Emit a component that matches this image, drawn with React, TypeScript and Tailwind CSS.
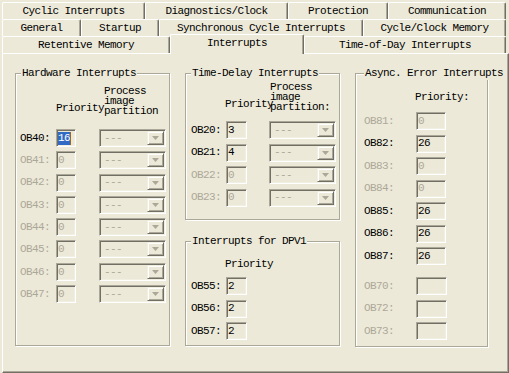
import React from 'react';

// Windows XP classic property sheet: "Interrupts" tab of a CPU config dialog

const sunken =
  'border border-t-[#aca899] border-l-[#aca899] border-b-white border-r-white shadow-[inset_1px_1px_0_#716f64,inset_-1px_-1px_0_#f1efe2]';

function Edit({
  value,
  disabled = false,
  selected = false,
  className = '',
}: {
  value: string;
  disabled?: boolean;
  selected?: boolean;
  className?: string;
}) {
  return (
    <div className={`${sunken} ${className} h-[18px] flex items-center pl-[1px] overflow-hidden`}>
      {selected ? (
        <>
          <span className="bg-[#316ac5] text-white leading-[13px]">{value}</span>
          <span className="w-px h-[13px] bg-[#9c6a1c]" />
        </>
      ) : (
        <span className={disabled ? 'text-[#aca899]' : 'text-black'}>{value}</span>
      )}
    </div>
  );
}

function Combo() {
  return (
    <div className={`${sunken} w-[67px] h-[18px] flex items-center justify-between pl-[4px] pr-[1px]`}>
      <span className="text-[#aca899]">---</span>
      <div className="w-[17px] h-[14px] bg-[#ece9d8] border border-t-[#f1efe2] border-l-[#f1efe2] border-b-[#716f64] border-r-[#716f64] shadow-[inset_1px_1px_0_#ffffff,inset_-1px_-1px_0_#aca899] flex items-center justify-center">
        <svg width="7" height="4" viewBox="0 0 7 4">
          <path d="M0 0h7L3.5 4z" fill="#aca899" />
        </svg>
      </div>
    </div>
  );
}

function Group({
  title,
  className = '',
  titleClass = 'left-[5px]',
  children,
}: {
  title: string;
  className?: string;
  titleClass?: string;
  children: React.ReactNode;
}) {
  return (
    <div
      className={`relative border border-[#aca899] shadow-[inset_1px_1px_0_#ffffff,1px_1px_0_#ffffff] ${className}`}
    >
      <span className={`absolute -top-[7px] ${titleClass} px-[1px] bg-[#ece9d8] leading-[13px] whitespace-nowrap`}>
        {title}
      </span>
      {children}
    </div>
  );
}

function Tab({ label, w, selected = false }: { label: string; w: string; selected?: boolean }) {
  if (selected) {
    return (
      <div
        className={`${w} relative z-10 -mt-[2px] h-[20px] bg-[#ece9d8] border-t border-l border-white rounded-t-[2px] border-r border-r-[#716f64] shadow-[inset_-1px_0_0_#aca899] text-center leading-[17px]`}
      >
        {label}
      </div>
    );
  }
  return (
    <div
      className={`${w} h-[17px] bg-[#ece9d8] border-t border-l border-white rounded-t-[2px] border-r border-r-[#716f64] shadow-[inset_-1px_0_0_#aca899] text-center leading-[16px]`}
    >
      {label}
    </div>
  );
}

const hardware = [
  { ob: 'OB40:', prio: '16', on: true },
  { ob: 'OB41:', prio: '0', on: false },
  { ob: 'OB42:', prio: '0', on: false },
  { ob: 'OB43:', prio: '0', on: false },
  { ob: 'OB44:', prio: '0', on: false },
  { ob: 'OB45:', prio: '0', on: false },
  { ob: 'OB46:', prio: '0', on: false },
  { ob: 'OB47:', prio: '0', on: false },
];

const timeDelay = [
  { ob: 'OB20:', prio: '3', on: true },
  { ob: 'OB21:', prio: '4', on: true },
  { ob: 'OB22:', prio: '0', on: false },
  { ob: 'OB23:', prio: '0', on: false },
];

const dpv1 = ['OB55:', 'OB56:', 'OB57:'];

const asyncErr = [
  { ob: 'OB81:', prio: '0', on: false },
  { ob: 'OB82:', prio: '26', on: true },
  { ob: 'OB83:', prio: '0', on: false },
  { ob: 'OB84:', prio: '0', on: false },
  { ob: 'OB85:', prio: '26', on: true },
  { ob: 'OB86:', prio: '26', on: true },
  { ob: 'OB87:', prio: '26', on: true },
];

export default function App() {
  return (
    <div className="w-[509px] h-[373px] bg-[#ece9d8] text-black font-['Liberation_Mono',monospace] text-[11px] tracking-[-0.6px] overflow-hidden">
      {/* tab rows */}
      <div className="pt-[2px] pl-[2px]">
        <div className="flex">
          <Tab label="Cyclic Interrupts" w="w-[143px]" />
          <Tab label="Diagnostics/Clock" w="w-[143px]" />
          <Tab label="Protection" w="w-[100px]" />
          <Tab label="Communication" w="w-[118px]" />
        </div>
        <div className="flex">
          <Tab label="General" w="w-[79px]" />
          <Tab label="Startup" w="w-[78px]" />
          <Tab label="Synchronous Cycle Interrupts" w="w-[204px]" />
          <Tab label="Cycle/Clock Memory" w="w-[143px]" />
        </div>
        <div className="flex items-start h-[17px]">
          <Tab label="Retentive Memory" w="w-[168px]" />
          <Tab label="Interrupts" w="w-[134px]" selected />
          <Tab label="Time-of-Day Interrupts" w="w-[202px]" />
        </div>
      </div>

      {/* page */}
      <div className="ml-[2px] w-[507px] h-[320px] border-t border-l border-white border-r border-b border-r-[#716f64] border-b-[#716f64] shadow-[inset_-1px_-1px_0_#aca899] pl-[12px] pt-[19px] flex gap-[15px]">
        <Group title="Hardware Interrupts" className="w-[155px] h-[273px]">
          <div className="pt-[12px] pl-[40px] flex items-end">
            <span className="w-[48px] whitespace-nowrap leading-[13px] mb-[1px]">Priority</span>
            <div className="leading-[10px]">
              <div>Process</div>
              <div>image</div>
              <div>partition</div>
            </div>
          </div>
          <div className="mt-[13px] flex flex-col gap-[4.3px]">
            {hardware.map((r) => (
              <div key={r.ob} className="flex items-center">
                <span className={`w-[40px] pl-[4px] ${r.on ? 'text-black' : 'text-[#aca899]'}`}>{r.ob}</span>
                <Edit value={r.prio} disabled={!r.on} selected={r.on} className="w-[20px]" />
                <div className="ml-[23px]">
                  <Combo />
                </div>
              </div>
            ))}
          </div>
        </Group>

        <div className="flex flex-col">
          <Group title="Time-Delay Interrupts" className="w-[155px] h-[147px]">
            <div className="pt-[8px] pl-[39px] flex items-end">
              <span className="w-[45px] whitespace-nowrap leading-[13px] mb-[1px]">Priority</span>
              <div className="leading-[10px]">
                <div>Process</div>
                <div>image</div>
                <div>partition:</div>
              </div>
            </div>
            <div className="mt-[9px] flex flex-col gap-[4.5px]">
              {timeDelay.map((r) => (
                <div key={r.ob} className="flex items-center">
                  <span className={`w-[40px] pl-[5px] ${r.on ? 'text-black' : 'text-[#aca899]'}`}>{r.ob}</span>
                  <Edit value={r.prio} disabled={!r.on} className="w-[21px]" />
                  <div className="ml-[22px]">
                    <Combo />
                  </div>
                </div>
              ))}
            </div>
          </Group>

          <Group title="Interrupts for DPV1" className="mt-[21px] w-[155px] h-[105px]">
            <div className="pt-[16px] pl-[39px] leading-[13px]">Priority</div>
            <div className="mt-[6px] flex flex-col gap-[4.5px]">
              {dpv1.map((ob) => (
                <div key={ob} className="flex items-center">
                  <span className="w-[40px] pl-[5px]">{ob}</span>
                  <Edit value="2" className="w-[21px]" />
                </div>
              ))}
            </div>
          </Group>
        </div>

        <Group title="Async. Error Interrupts" titleClass="left-[8px]" className="w-[133px] h-[274px]">
          <div className="pt-[17px] pl-[59px] leading-[13px]">Priority:</div>
          <div className="mt-[8px] flex flex-col gap-[4.5px]">
            {asyncErr.map((r) => (
              <div key={r.ob} className="flex items-center">
                <span className={`w-[60px] pl-[8px] ${r.on ? 'text-black' : 'text-[#aca899]'}`}>{r.ob}</span>
                <Edit value={r.prio} disabled={!r.on} className="w-[30px]" />
              </div>
            ))}
          </div>
          <div className="mt-[12px] flex flex-col gap-[4.5px]">
            {['OB70:', 'OB72:', 'OB73:'].map((ob) => (
              <div key={ob} className="flex items-center">
                <span className="w-[60px] pl-[8px] text-[#aca899]">{ob}</span>
                <Edit value="" disabled className="w-[31px]" />
              </div>
            ))}
          </div>
        </Group>
      </div>
    </div>
  );
}
